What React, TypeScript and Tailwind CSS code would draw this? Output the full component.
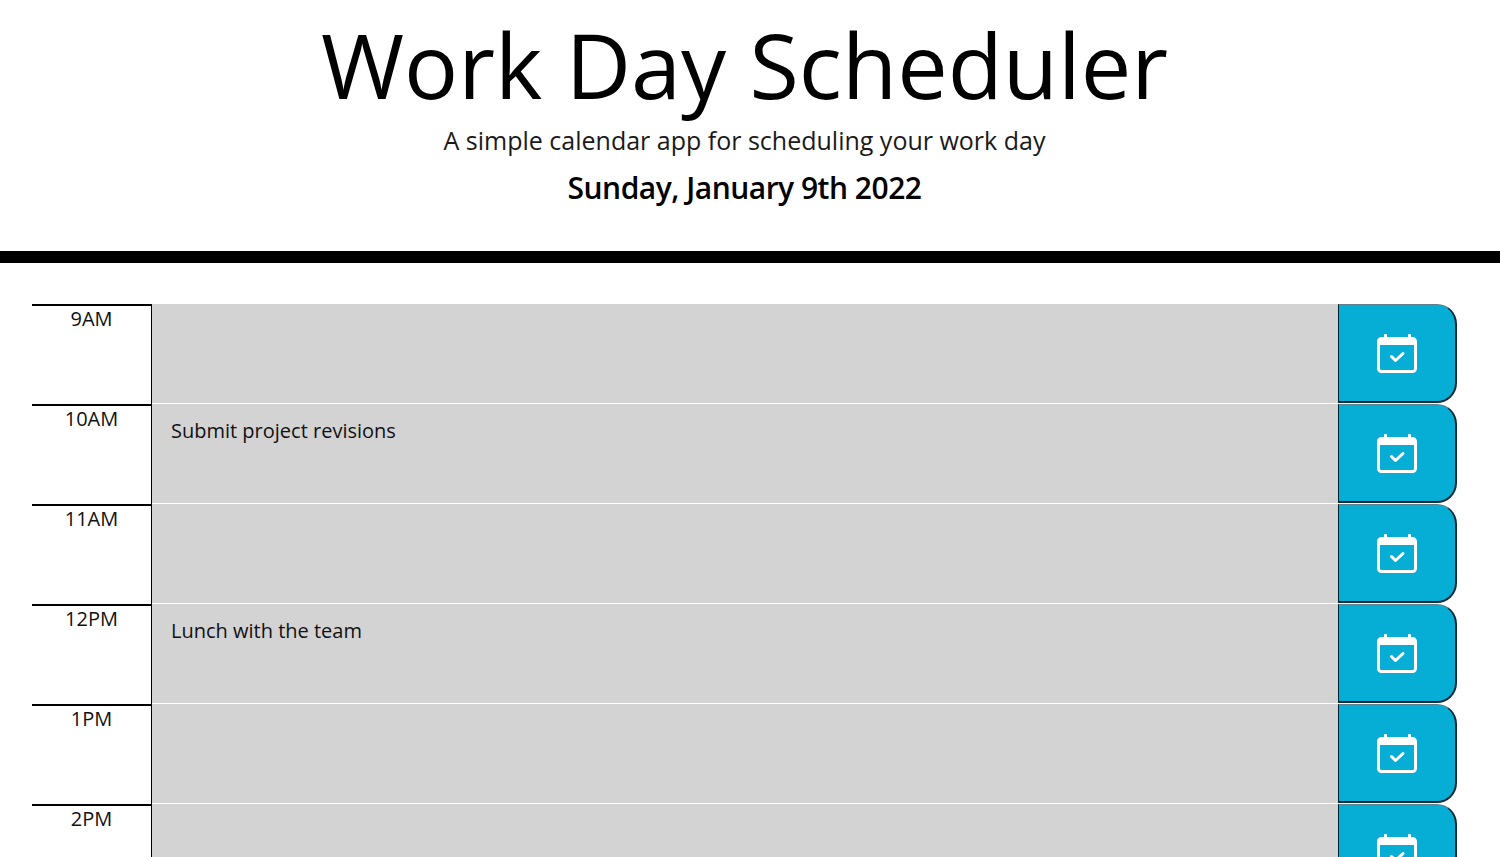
const rows = [
  { hour: "9AM", text: "" },
  { hour: "10AM", text: "Submit project revisions" },
  { hour: "11AM", text: "" },
  { hour: "12PM", text: "Lunch with the team" },
  { hour: "1PM", text: "" },
  { hour: "2PM", text: "" },
];

function CalendarCheck() {
  return (
    <svg width="42" height="42" viewBox="0 0 42 42" fill="none" className="block">
      <rect x="2.5" y="6.5" width="37" height="33" rx="3" stroke="white" strokeWidth="3" />
      <rect x="2.5" y="6.5" width="37" height="6.5" fill="white" />
      <rect x="8" y="2" width="3" height="5" rx="1" fill="white" />
      <rect x="32" y="2" width="3" height="5" rx="1" fill="white" />
      <path d="M15.5 24.5 L19.5 28.5 L27 21.5" stroke="white" strokeWidth="3" strokeLinecap="round" strokeLinejoin="round" />
    </svg>
  );
}

export default function App() {
  return (
    <div className="h-[857px] overflow-hidden bg-white text-[#111] font-['Open_Sans',sans-serif]">
      <header className="h-[263px] border-b-[12px] border-black text-center pr-[11px] flex flex-col items-center">
        <h1 className="mt-[7px] text-[90px] leading-[115px] font-normal text-black">Work Day Scheduler</h1>
        <p className="mt-0 text-[25px] leading-[36px] font-normal text-[#1a1a1a]">A simple calendar app for scheduling your work day</p>
        <p className="mt-[12px] text-[30px] leading-[36px] font-semibold text-black tracking-[-0.5px]">Sunday, January 9th 2022</p>
      </header>
      <main className="mt-[41px] ml-[32px] w-[1425px] flex flex-col">
        {rows.map((r) => (
          <div key={r.hour} className="flex h-[100px] shrink-0">
            <div className="w-[120px] border-t-2 border-r border-black text-center text-[20px] leading-[26px] pt-0">
              {r.hour}
            </div>
            <div className="flex-1 bg-[#d3d3d3] border-b border-white pl-[19px] pt-[13px] text-[20px] leading-[28px]">
              {r.text}
            </div>
            <div className="w-[119px] h-[99px] bg-[#06aed5] border-l border-black/80 border-t border-t-[#60808c] border-r-2 border-r-[#0b2a38] border-b-2 border-b-[#0b2a38] rounded-tr-[20px] rounded-br-[20px] flex items-center justify-center pr-[1px]">
              <CalendarCheck />
            </div>
          </div>
        ))}
      </main>
    </div>
  );
}
